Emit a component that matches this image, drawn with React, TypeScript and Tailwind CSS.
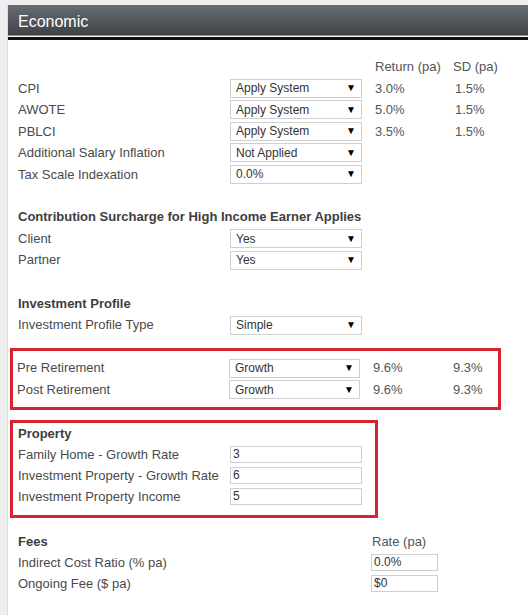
import React from "react";

const font = { fontFamily: '"Liberation Sans", Arial, sans-serif' };

function Select({ value, w = "w-[132px]" }: { value: string; w?: string }) {
  return (
    <div className={`${w} h-[19px] border border-[#cfcfcf] bg-white flex items-center justify-between pl-[5px] pr-[5px] text-[12px] text-[#333]`}>
      <span>{value}</span>
      <span className="text-[10px] text-black leading-none">▼</span>
    </div>
  );
}

function Input({ value, w = "w-[132px]", h = "h-[17px]" }: { value: string; w?: string; h?: string }) {
  return (
    <div className={`${w} ${h} border border-[#cfcfcf] bg-white flex items-center pl-[2px] text-[12px] text-[#333]`}>
      {value}
    </div>
  );
}

function Row({
  label,
  children,
  ret,
  sd,
  h = "h-[21.5px]",
  bold = false,
}: {
  label: string;
  children?: React.ReactNode;
  ret?: string;
  sd?: string;
  h?: string;
  bold?: boolean;
}) {
  return (
    <div className={`flex items-center ${h}`}>
      <div className={`w-[212px] shrink-0 whitespace-nowrap text-[13px] ${bold ? "font-bold text-[#3d3d3d]" : "text-[#4a4a4a]"}`}>{label}</div>
      {children}
      {ret !== undefined && <div className="ml-[13px] w-[80px] text-[13px] text-[#555]">{ret}</div>}
      {sd !== undefined && <div className="text-[13px] text-[#555]">{sd}</div>}
    </div>
  );
}

export default function App() {
  return (
    <div className="w-[528px] h-[615px] bg-[#efefef] overflow-hidden pt-[5px]" style={font}>
      <div className="flex h-full">
        <div className="w-[8px] shrink-0 border-r border-[#dedede]" />
        <div className="flex-1 bg-white flex flex-col">
          <div className="h-[31px] bg-gradient-to-b from-[#686d73] to-[#3f4348] border-b border-[#8c9095] flex items-center pl-[10px] pt-[3px]">
            <span className="text-white text-[16px]">Economic</span>
          </div>
          <div className="h-[1px] bg-white" />
          <div className="h-[3px] bg-[#111]" />
          <div className="pl-[2px] pt-[16px]">
            <div className="pl-[8px]">
              <div className="flex items-center h-[21.5px]">
                <div className="w-[357px] shrink-0" />
                <div className="w-[78px] text-[13px] text-[#555]">Return (pa)</div>
                <div className="text-[13px] text-[#555]">SD (pa)</div>
              </div>
              <Row label="CPI" ret="3.0%" sd="1.5%">
                <Select value="Apply System" />
              </Row>
              <Row label="AWOTE" ret="5.0%" sd="1.5%">
                <Select value="Apply System" />
              </Row>
              <Row label="PBLCI" ret="3.5%" sd="1.5%">
                <Select value="Apply System" />
              </Row>
              <Row label="Additional Salary Inflation">
                <Select value="Not Applied" />
              </Row>
              <Row label="Tax Scale Indexation">
                <Select value="0.0%" />
              </Row>
              <div className="h-[21.25px]" />
              <Row label="Contribution Surcharge for High Income Earner Applies" bold />
              <Row label="Client">
                <Select value="Yes" />
              </Row>
              <Row label="Partner">
                <Select value="Yes" />
              </Row>
              <div className="h-[22px]" />
              <Row label="Investment Profile" bold />
              <Row label="Investment Profile Type">
                <Select value="Simple" />
              </Row>
            </div>
            <div className="h-[12.5px]" />
            <div className="w-[491px] border-[3px] border-[#d7232f] pl-[4px] pt-[6px] pb-[6.5px]">
              <Row label="Pre Retirement" ret="9.6%" sd="9.3%">
                <Select value="Growth" w="w-[131px]" />
              </Row>
              <Row label="Post Retirement" ret="9.6%" sd="9.3%">
                <Select value="Growth" w="w-[131px]" />
              </Row>
            </div>
            <div className="h-[10px]" />
            <div className="w-[368px] border-[3px] border-[#d7232f] pl-[5px] pb-[8px]">
              <Row label="Property" bold h="h-[21px]" />
              <Row label="Family Home - Growth Rate" h="h-[21px]">
                <Input value="3" />
              </Row>
              <Row label="Investment Property - Growth Rate" h="h-[21px]">
                <Input value="6" />
              </Row>
              <Row label="Investment Property Income" h="h-[21px]">
                <Input value="5" />
              </Row>
            </div>
            <div className="pl-[8px] pt-[13px]">
              <div className="flex items-center h-[21px]">
                <div className="w-[354px] shrink-0 text-[13px] font-bold text-[#3d3d3d]">Fees</div>
                <div className="text-[13px] text-[#555]">Rate (pa)</div>
              </div>
              <div className="flex items-center h-[21px]">
                <div className="w-[353px] shrink-0 text-[13px] text-[#4a4a4a]">Indirect Cost Ratio (% pa)</div>
                <Input value="0.0%" w="w-[67px]" />
              </div>
              <div className="flex items-center h-[21px]">
                <div className="w-[353px] shrink-0 text-[13px] text-[#4a4a4a]">Ongoing Fee ($ pa)</div>
                <Input value="$0" w="w-[67px]" />
              </div>
            </div>
          </div>
        </div>
      </div>
    </div>
  );
}
